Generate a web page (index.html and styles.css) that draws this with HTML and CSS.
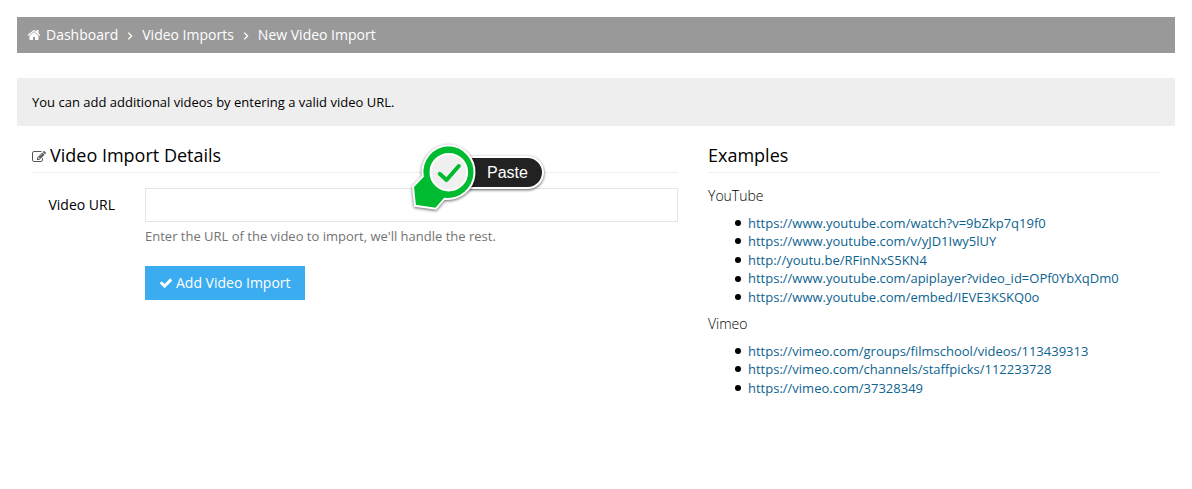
FILE: index.html
```html
<!DOCTYPE html>
<html lang="en">
<head>
<meta charset="utf-8">
<title>New Video Import</title>
<link rel="stylesheet" href="styles.css">
</head>
<body>
<nav class="breadcrumb">
  <svg class="icon-home" viewBox="0 0 1792 1792"><path d="M1472 992v480q0 26-19 45t-45 19h-384v-384h-256v384h-384q-26 0-45-19t-19-45v-480q0-1 .5-3t.5-3l575-474 575 474q1 2 1 6zm223-69l-62 74q-8 9-21 11h-3q-13 0-21-7l-692-577-692 577q-12 8-24 7-13-2-21-11l-62-74q-8-10-7-23.5t11-21.5l719-599q32-26 76-26t76 26l244 204v-195q0-14 9-23t23-9h192q14 0 23 9t9 23v408l219 182q10 8 11 21.5t-7 23.5z"/></svg>
  <a>Dashboard</a>
  <svg class="icon-angle" viewBox="0 0 6 10"><path d="M1.2 1.6 4.6 5 1.2 8.4"/></svg>
  <a>Video Imports</a>
  <svg class="icon-angle" viewBox="0 0 6 10"><path d="M1.2 1.6 4.6 5 1.2 8.4"/></svg>
  <a>New Video Import</a>
</nav>
<p class="note">You can add additional videos by entering a valid video URL.</p>
<main class="columns">
  <section class="details">
    <h2 class="heading"><svg class="icon-edit" viewBox="0 0 1792 1792"><path d="M888 1184l116-116-152-152-116 116v56h96v96h56zm440-720q-16-16-33 1l-350 350q-17 17-1 33t33-1l350-350q17-17 1-33zm80 594v190q0 119-84.5 203.5t-203.5 84.5h-832q-119 0-203.5-84.5t-84.5-203.5v-832q0-119 84.5-203.5t203.5-84.5h832q63 0 117 25 15 7 18 23 3 17-9 29l-49 49q-14 14-32 8-23-6-45-6h-832q-66 0-113 47t-47 113v832q0 66 47 113t113 47h832q66 0 113-47t47-113v-126q0-13 9-22l64-64q15-15 35-7t20 29zm-96-738l288 288-672 672h-288v-288zm444 132l-92 92-288-288 92-92q28-28 68-28t68 28l152 152q28 28 28 68t-28 68z"/></svg>Video Import Details</h2>
    <div class="form-row">
      <label class="label" for="url">Video URL</label>
      <div class="field">
        <input class="input" id="url" type="text">
        <p class="help">Enter the URL of the video to import, we'll handle the rest.</p>
        <button class="button"><svg class="icon-check" viewBox="0 0 1792 1792"><path d="M1671 566q0 40-28 68l-724 724-136 136q-28 28-68 28t-68-28l-136-136-362-362q-28-28-28-68t28-68l136-136q28-28 68-28t68 28l294 295 656-657q28-28 68-28t68 28l136 136q28 28 28 68z"/></svg>Add Video Import</button>
      </div>
    </div>
    <div class="callout">
      <span class="callout-text">Paste</span>
      <svg class="callout-pin" viewBox="0 0 80 80">
        <path class="pin-edge" d="M36.7 8.3a26.8 26.8 0 1 1-4.1 53.4L23.8 71.8 3 68.8 1 49.5 10.8 39.4A26.8 26.8 0 0 1 36.7 8.3z"/>
        <circle class="pin-disc" cx="36.8" cy="35.2" r="18.3"/>
        <path class="pin-check" d="M27.7 36.8 34.5 43 46.8 29"/>
      </svg>
    </div>
  </section>
  <aside class="examples">
    <h2 class="heading">Examples</h2>
    <h3 class="subheading">YouTube</h3>
    <ul class="links">
      <li><a>https://www.youtube.com/watch?v=9bZkp7q19f0</a></li>
      <li><a>https://www.youtube.com/v/yJD1Iwy5lUY</a></li>
      <li><a>http://youtu.be/RFinNxS5KN4</a></li>
      <li><a>https://www.youtube.com/apiplayer?video_id=OPf0YbXqDm0</a></li>
      <li><a>https://www.youtube.com/embed/IEVE3KSKQ0o</a></li>
    </ul>
    <h3 class="subheading">Vimeo</h3>
    <ul class="links">
      <li><a>https://vimeo.com/groups/filmschool/videos/113439313</a></li>
      <li><a>https://vimeo.com/channels/staffpicks/112233728</a></li>
      <li><a>https://vimeo.com/37328349</a></li>
    </ul>
  </aside>
</main>
</body>
</html>
```

FILE: styles.css
```css
* { box-sizing: border-box; }
body {
  margin: 0;
  padding: 17px 17px 0;
  background: #fff;
  color: #000;
  font: 13px/1.42857 "Open Sans", sans-serif;
}
.breadcrumb {
  display: flex;
  align-items: center;
  height: 36px;
  padding: 0 10px;
  background: #999;
  color: #fff;
  font-size: 14px;
}
.icon-home { width: 14px; height: 14px; margin-right: 5px; fill: #fff; }
.icon-angle {
  width: 6px;
  height: 10px;
  margin: 1px 9px 0;
  fill: none;
  stroke: #fff;
  stroke-width: 1.3;
}
.note {
  height: 48px;
  margin: 25px 0 0;
  padding: 0 15px;
  background: #eee;
  line-height: 48px;
}
.columns {
  display: grid;
  grid-template-columns: 646px 452px;
  gap: 30px;
  padding: 17px 15px 0;
}
.details { position: relative; }
.heading {
  height: 30px;
  margin: 0 0 15px;
  border-bottom: 1px solid #eee;
  font-size: 18px;
  font-weight: 400;
  line-height: 25px;
}
.icon-edit { width: 14px; height: 14px; margin-right: 4px; vertical-align: -2px; fill: #555; }
.form-row { display: grid; grid-template-columns: 83px 533px; column-gap: 30px; }
.label { text-align: right; font-size: 14px; line-height: 34px; }
.field { display: flex; flex-direction: column; align-items: flex-start; }
.input {
  width: 533px;
  height: 34px;
  border: 1px solid #e5e5e5;
  background: #fff;
}
.help { margin: 5px 0 20px; color: #737373; }
.button {
  display: flex;
  align-items: center;
  height: 34px;
  padding: 0 14px;
  border: 0;
  background: #3bacf0;
  color: #fff;
  font: 14px/34px "Open Sans", sans-serif;
}
.icon-check { width: 14px; height: 14px; margin-right: 3px; fill: #fff; }
.subheading {
  margin: 0 0 9.6px;
  font-size: 14px;
  font-weight: 300;
  line-height: 16px;
}
.links { margin: 0 0 9.6px; padding-left: 27px; list-style: none; }
.links li { display: flex; align-items: center; gap: 7px; }
.links li::before {
  content: "";
  width: 6px;
  height: 6px;
  border-radius: 50%;
  background: #000;
}
.links a { color: #0d638f; }
.callout { position: absolute; left: 380px; top: -6px; width: 134px; height: 80px; }
.callout-text {
  position: absolute;
  left: 40px;
  top: 19px;
  width: 92px;
  height: 33px;
  padding-left: 33px;
  border: 2px solid #fff;
  border-radius: 17px;
  background: #222;
  box-shadow: 0 1px 3px rgba(0, 0, 0, .65);
  color: #fff;
  font: 16px/29px "Liberation Sans", sans-serif;
}
.callout-pin {
  position: absolute;
  left: 0;
  top: 0;
  width: 80px;
  height: 80px;
  overflow: visible;
  filter: drop-shadow(0 1px 1.5px rgba(0, 0, 0, .6));
}
.pin-edge { fill: #00ba2f; stroke: #fff; stroke-width: 2; }
.pin-disc { fill: #f0f0f0; stroke: #fff; stroke-width: 2; }
.pin-check { fill: none; stroke: #00ba2f; stroke-width: 4; stroke-linecap: round; stroke-linejoin: round; }
```
